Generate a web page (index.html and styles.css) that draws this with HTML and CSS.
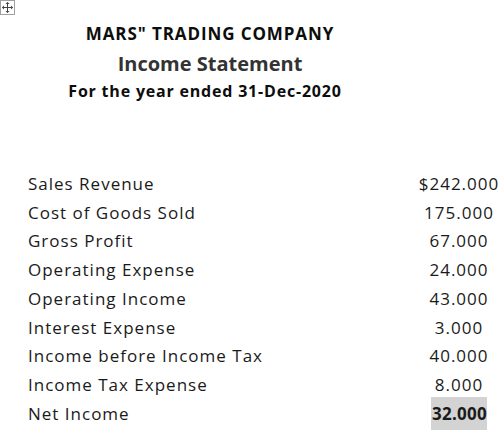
FILE: index.html
```html
<!DOCTYPE html>
<html>
<head>
<meta charset="utf-8">
<link rel="stylesheet" href="styles.css">
</head>
<body>
<div class="page">
  <div class="handle">
    <svg width="15" height="15" viewBox="0 0 15 15">
      <rect x="0.5" y="0.5" width="14" height="14" fill="#fff" stroke="#a0a0a0"/>
      <path d="M7.5 2.5v10M2.5 7.5h10" stroke="#444" stroke-width="1"/>
      <path d="M7.5 2l-2 2h4zM7.5 13l-2-2h4zM2 7.5l2-2v4zM13 7.5l-2-2v4z" fill="#444"/>
    </svg>
  </div>
  <header class="head">
    <div class="company">MARS" TRADING COMPANY</div>
    <div class="title">Income Statement</div>
    <div class="period">For the year ended 31-Dec-2020</div>
  </header>
  <div class="rows">
    <div class="label">Sales Revenue</div><div class="num">$242.000</div>
    <div class="label">Cost of Goods Sold</div><div class="num">175.000</div>
    <div class="label">Gross Profit</div><div class="num">67.000</div>
    <div class="label">Operating Expense</div><div class="num">24.000</div>
    <div class="label">Operating Income</div><div class="num">43.000</div>
    <div class="label">Interest Expense</div><div class="num">3.000</div>
    <div class="label">Income before Income Tax</div><div class="num">40.000</div>
    <div class="label">Income Tax Expense</div><div class="num">8.000</div>
    <div class="label">Net Income</div><div class="num"><span class="total">32.000</span></div>
  </div>
</div>
</body>
</html>
```

FILE: styles.css
```css
html, body {
  margin: 0;
  padding: 0;
  background: #fff;
}
body {
  font-family: "Open Sans", Lato, "Liberation Sans", sans-serif;
  color: #1a1a1a;
}
.page {
  width: 504px;
  height: 437px;
  position: relative;
}
.handle {
  position: absolute;
  left: 0;
  top: 0;
  width: 15px;
  height: 15px;
}
.handle svg { display: block; }
.head {
  width: 420px;
  padding-top: 23px;
  text-align: center;
}
.company {
  font-weight: 700;
  font-size: 17px;
  line-height: 22px;
  letter-spacing: 0.9px;
  color: #0d0d0d;
}
.title {
  font-weight: 700;
  font-size: 20px;
  line-height: 26px;
  margin-top: 6px;
  color: #333;
}
.period {
  font-weight: 700;
  font-size: 16px;
  line-height: 21px;
  letter-spacing: 0.8px;
  margin-top: 4px;
  padding-right: 10px;
  color: #0d0d0d;
}
.rows {
  display: grid;
  grid-template-columns: 386px 90px;
  grid-auto-rows: 28.75px;
  padding-left: 28px;
  margin-top: 67px;
  font-size: 17px;
  letter-spacing: 1px;
  align-items: center;
}
.num {
  text-align: center;
}
.total {
  font-weight: 700;
  letter-spacing: 0.3px;
  background: #d3d3d3;
  padding: 5px 0 5px 1px;
}
```
